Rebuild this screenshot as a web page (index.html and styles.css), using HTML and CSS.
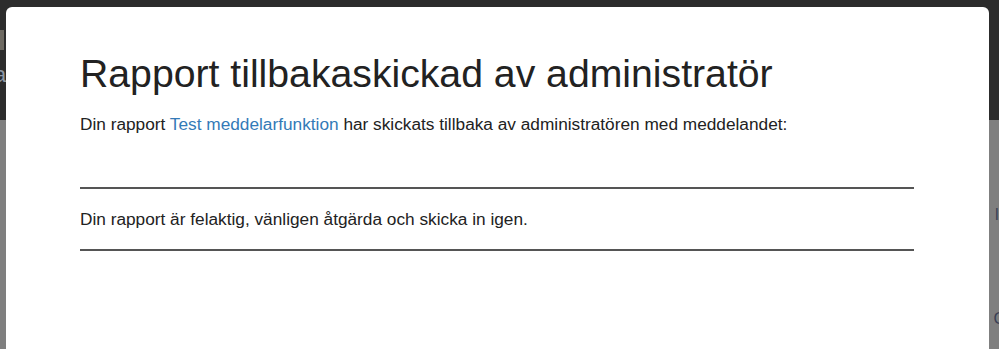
FILE: index.html
```html
<!DOCTYPE html>
<html lang="sv">
<head>
    <meta charset="UTF-8">
    <meta name="viewport" content="width=device-width, initial-scale=1.0">
    <title>Rapport tillbakaskickad</title>
    <link rel="stylesheet" href="styles.css">
</head>
<body>
    <!-- page behind the overlay -->
    <div class="topbar">
        <div class="topbar-tab"></div>
        <span class="topbar-title">a</span>
    </div>
    <div class="page">
        <p class="page-text first">l,</p>
        <p class="page-text second">C</p>
    </div>

    <div class="modal">
        <h1 class="modal-title">Rapport tillbakaskickad av administratör</h1>
        <p class="modal-intro">Din rapport <a href="#" class="report-link">Test meddelarfunktion</a> har skickats tillbaka av administratören med meddelandet:</p>
        <div class="admin-message">
            <p>Din rapport är felaktig, vänligen åtgärda och skicka in igen.</p>
        </div>
    </div>
</body>
</html>
```

FILE: styles.css
```css
html, body {
    margin: 0;
    height: 100%;
    overflow: hidden;
}

body {
    background-color: #7f7f7f;
    font-family: "Liberation Sans", Arial, sans-serif;
    color: #222;
}

/* --- Page behind the modal --- */
.topbar {
    height: 120px;
    background-color: #2c2c2c;
    display: flex;
    flex-direction: column;
    align-items: flex-start;
}

.topbar-tab {
    width: 4px;
    height: 20px;
    margin-top: 30px;
    background-color: #6e6a62;
}

.topbar-title {
    margin-top: 12px;
    margin-left: -6px;
    font-size: 22px;
    color: #8d97a3;
}

.page {
    display: flex;
    flex-direction: column;
    align-items: flex-end;
}

.page-text {
    margin: 0;
    font-size: 16px;
    color: #3a3f55;
}

.page-text.first {
    margin-top: 86px;
    margin-right: -4px;
}

.page-text.second {
    margin-top: 86px;
    margin-right: -6px;
}

/* --- Modal --- */
.modal {
    position: absolute;
    top: 7px;
    left: 6px;
    width: 983px;
    height: 400px;
    box-sizing: border-box;
    padding: 0 75px 0 74px;
    background-color: #fff;
    border-radius: 6px;
}

.modal-title {
    margin: 43px 0 0;
    font-size: 39.2px;
    font-weight: normal;
    line-height: 47px;
    color: #222;
}

.modal-intro {
    margin: 16px 0 0;
    font-size: 17.25px;
    line-height: 22px;
}

.report-link {
    color: #337ab7;
    text-decoration: none;
}

.admin-message {
    margin-top: 52px;
    border-top: 2px solid #555;
    border-bottom: 2px solid #555;
}

.admin-message p {
    margin: 0;
    padding: 19px 0 19px;
    font-size: 17.25px;
    line-height: 22px;
}
```
